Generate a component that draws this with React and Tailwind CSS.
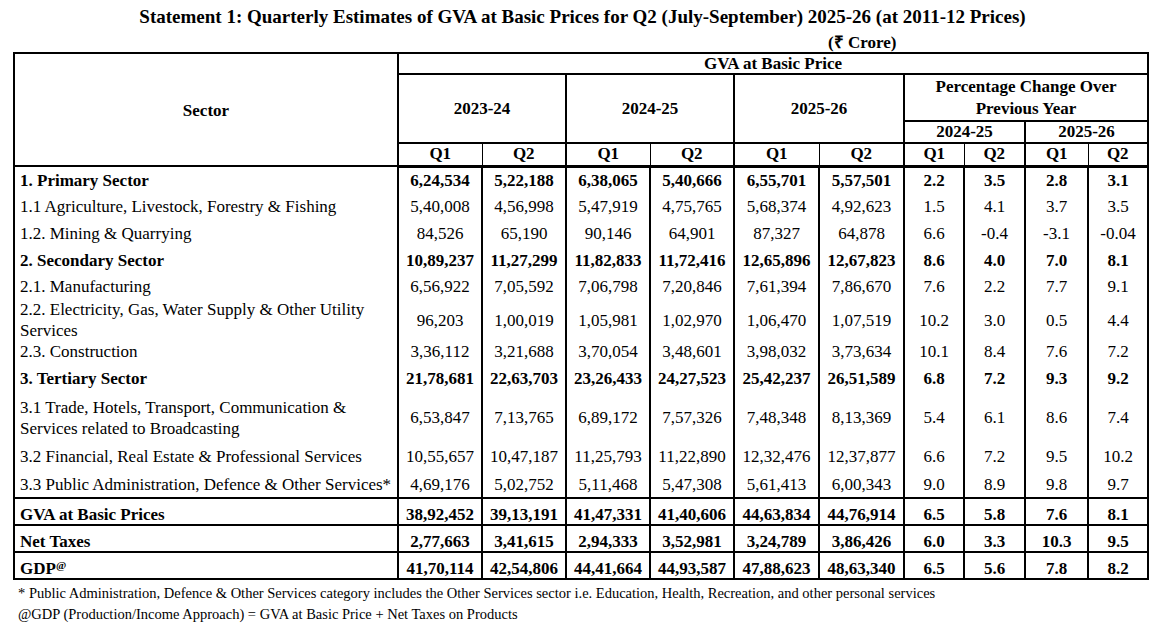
import React from 'react';

// h = row height, pad = extra top padding for the row's cells
const rows = [
    { label: '1. Primary Sector', bold: true, h: 'h-[27px]', pad: 'pt-0', v: ['6,24,534', '5,22,188', '6,38,065', '5,40,666', '6,55,701', '5,57,501', '2.2', '3.5', '2.8', '3.1'] },
    { label: '1.1 Agriculture, Livestock, Forestry & Fishing', h: 'h-[27px]', pad: 'pt-0', v: ['5,40,008', '4,56,998', '5,47,919', '4,75,765', '5,68,374', '4,92,623', '1.5', '4.1', '3.7', '3.5'] },
    { label: '1.2. Mining & Quarrying', h: 'h-[27px]', pad: 'pt-0', v: ['84,526', '65,190', '90,146', '64,901', '87,327', '64,878', '6.6', '-0.4', '-3.1', '-0.04'] },
    { label: '2. Secondary Sector', bold: true, h: 'h-[26px]', pad: 'pt-0', v: ['10,89,237', '11,27,299', '11,82,833', '11,72,416', '12,65,896', '12,67,823', '8.6', '4.0', '7.0', '8.1'] },
    { label: '2.1. Manufacturing', h: 'h-[26px]', pad: 'pt-0', v: ['6,56,922', '7,05,592', '7,06,798', '7,20,846', '7,61,394', '7,86,670', '7.6', '2.2', '7.7', '9.1'] },
    { label: ['2.2. Electricity, Gas, Water Supply & Other Utility', 'Services'], h: 'h-[42px]', pad: 'pt-0', v: ['96,203', '1,00,019', '1,05,981', '1,02,970', '1,06,470', '1,07,519', '10.2', '3.0', '0.5', '4.4'] },
    { label: '2.3. Construction', h: 'h-[21px]', pad: 'pt-0', v: ['3,36,112', '3,21,688', '3,70,054', '3,48,601', '3,98,032', '3,73,634', '10.1', '8.4', '7.6', '7.2'] },
    { label: '3. Tertiary Sector', bold: true, h: 'h-[30px]', pad: 'pt-[2px]', v: ['21,78,681', '22,63,703', '23,26,433', '24,27,523', '25,42,237', '26,51,589', '6.8', '7.2', '9.3', '9.2'] },
    { label: ['3.1 Trade, Hotels, Transport, Communication &', 'Services related to Broadcasting'], h: 'h-[51px]', pad: 'pt-0', v: ['6,53,847', '7,13,765', '6,89,172', '7,57,326', '7,48,348', '8,13,369', '5.4', '6.1', '8.6', '7.4'] },
    { label: '3.2 Financial, Real Estate & Professional Services', h: 'h-[27px]', pad: 'pt-0', v: ['10,55,657', '10,47,187', '11,25,793', '11,22,890', '12,32,476', '12,37,877', '6.6', '7.2', '9.5', '10.2'] },
    { label: '3.3 Public Administration, Defence & Other Services*', h: 'h-[28px]', pad: 'pt-[1px]', v: ['4,69,176', '5,02,752', '5,11,468', '5,47,308', '5,61,413', '6,00,343', '9.0', '8.9', '9.8', '9.7'] },
];

const totals = [
    { label: 'GVA at Basic Prices', v: ['38,92,452', '39,13,191', '41,47,331', '41,40,606', '44,63,834', '44,76,914', '6.5', '5.8', '7.6', '8.1'] },
    { label: 'Net Taxes', v: ['2,77,663', '3,41,615', '2,94,333', '3,52,981', '3,24,789', '3,86,426', '6.0', '3.3', '10.3', '9.5'] },
    { label: 'GDP', sup: '@', v: ['41,70,114', '42,54,806', '44,41,664', '44,93,587', '47,88,623', '48,63,340', '6.5', '5.6', '7.8', '8.2'] },
];

export default function App() {
    return (
        <div className="w-[1165px] h-[633px] bg-white text-black font-['Liberation_Serif','Times_New_Roman',serif]">
            {/* Title */}
            <div className="pt-[6px] text-center text-[19px] font-bold leading-[22px]">
                Statement 1: Quarterly Estimates of GVA at Basic Prices for Q2 (July-September) 2025-26 (at 2011-12 Prices)
            </div>
            <div className="mt-[6px] pl-[828px] text-[17px] font-bold leading-[18px]">(₹ Crore)</div>

            <table className="ml-[13px] w-[1134px] table-fixed border-collapse border-2 border-black text-[17px]">
                <colgroup>
                    <col className="w-[384px]" />
                    <col className="w-[84px]" />
                    <col className="w-[84px]" />
                    <col className="w-[84px]" />
                    <col className="w-[84px]" />
                    <col className="w-[85px]" />
                    <col className="w-[85px]" />
                    <col className="w-[60px]" />
                    <col className="w-[61px]" />
                    <col className="w-[63px]" />
                    <col className="w-[60px]" />
                </colgroup>
                <thead>
                    <tr className="h-[21px]">
                        <th rowSpan={4} className="border-2 border-black font-bold leading-[20px] pt-[2px]">Sector</th>
                        <th colSpan={10} className="border-2 border-black font-bold leading-[19px] p-0">GVA at Basic Price</th>
                    </tr>
                    <tr className="h-[47px]">
                        <th colSpan={2} rowSpan={2} className="border-2 border-black font-bold">2023-24</th>
                        <th colSpan={2} rowSpan={2} className="border-2 border-black font-bold">2024-25</th>
                        <th colSpan={2} rowSpan={2} className="border-2 border-black font-bold">2025-26</th>
                        <th colSpan={4} className="border-2 border-black font-bold leading-[22px] p-0">
                            Percentage Change Over
                            <br />
                            Previous Year
                        </th>
                    </tr>
                    <tr className="h-[22px]">
                        <th colSpan={2} className="border-2 border-black font-bold leading-[20px] p-0">2024-25</th>
                        <th colSpan={2} className="border-2 border-black font-bold leading-[20px] p-0">2025-26</th>
                    </tr>
                    <tr className="h-[23px]">
                        {[0, 1, 2, 3, 4].map(i => (
                            <React.Fragment key={i}>
                                <th className="border border-black border-l-2 border-t-2 border-b-[3px] font-bold leading-[20px] p-0">Q1</th>
                                <th className="border border-black border-r-2 border-t-2 border-b-[3px] font-bold leading-[20px] p-0">Q2</th>
                            </React.Fragment>
                        ))}
                    </tr>
                </thead>
                <tbody>
                    {rows.map((r, i) => (
                        <tr key={i} className={r.h}>
                            <td className={`border-x-2 border-black pl-[5px] pr-0 pb-0 ${r.pad} leading-[21px] whitespace-nowrap ${r.bold ? 'font-bold' : ''}`}>
                                {Array.isArray(r.label) ? (
                                    <>
                                        {r.label[0]}
                                        <br />
                                        {r.label[1]}
                                    </>
                                ) : r.label}
                            </td>
                            {r.v.map((val, j) => (
                                <td key={j} className={`border-x-2 border-black text-center px-0 pb-0 ${r.pad} leading-[21px] ${r.bold ? 'font-bold' : ''}`}>
                                    {val}
                                </td>
                            ))}
                        </tr>
                    ))}
                    {/* Totals */}
                    {totals.map(r => (
                        <tr key={r.label} className="h-[27px]">
                            <td className="border-2 border-black pl-[5px] pr-0 pt-[7px] pb-0 leading-[18px] font-bold whitespace-nowrap">
                                {r.label}
                                {r.sup && <sup className="text-[11px]">{r.sup}</sup>}
                            </td>
                            {r.v.map((val, j) => (
                                <td key={j} className="border-2 border-black text-center px-0 pt-[7px] pb-0 leading-[18px] font-bold">
                                    {val}
                                </td>
                            ))}
                        </tr>
                    ))}
                </tbody>
            </table>

            {/* Footnotes */}
            <div className="ml-[18px] mt-[3px] text-[14.5px] leading-[21px]">
                <div>* Public Administration, Defence &amp; Other Services category includes the Other Services sector i.e. Education, Health, Recreation, and other personal services</div>
                <div>@GDP (Production/Income Approach) = GVA at Basic Price + Net Taxes on Products</div>
            </div>
        </div>
    );
}
